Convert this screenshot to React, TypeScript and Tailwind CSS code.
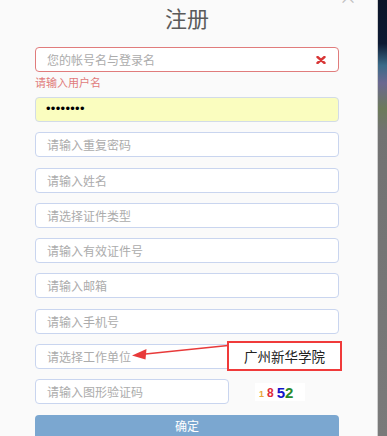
const fields = [
  '请输入重复密码',
  '请输入姓名',
  '请选择证件类型',
  '请输入有效证件号',
  '请输入邮箱',
  '请输入手机号',
  '请选择工作单位',
];

const font = { fontFamily: '"Noto Sans CJK SC", "Liberation Sans", sans-serif' };

const Field = ({ text }: { text: string }) => (
  <div className="h-[25px] rounded-[4px] border border-[#c9d5ef] bg-white pl-[11px] text-[12px] leading-[23px] text-[#acacac]">
    {text}
  </div>
);

export default function App() {
  return (
    <div className="flex h-[436px] w-[387px] overflow-hidden" style={font}>
      <div className="relative w-[377px] shrink-0 bg-[#fafafa] pl-[35px] pr-[38px]">
        {/* close button, mostly off screen */}
        <span className="absolute right-[20px] top-[-13px] text-[18px] leading-[18px] text-[#c0c0c0]">×</span>

        <div className="h-[35px] text-center text-[22px] leading-[35px] text-[#5a5a5a]">注册</div>

        <div className="mt-[12px] flex h-[25px] items-center justify-between rounded-[4px] border border-[#e07c7c] bg-white pl-[11px] pr-[12px] text-[12px] text-[#acacac]">
          <span>您的帐号名与登录名</span>
          <svg width="10" height="8" viewBox="0 0 10 8">
            <path d="M1.5 1 L8.5 7 M8.5 1 L1.5 7" stroke="#d83636" strokeWidth="2.4" strokeLinecap="round" />
          </svg>
        </div>
        <div className="h-[20px] text-[11px] leading-[20px] text-[#e07a7a]">请输入用户名</div>

        <div className="mt-[5px] flex flex-col gap-[10.3px]">
          <div
            className="h-[25px] rounded-[4px] border border-[#d2dbe8] bg-[#fafdbf] pl-[10px] text-[13px] leading-[22px] tracking-[0.3px] text-black"
            style={{ fontFamily: '"Liberation Sans", sans-serif' }}
          >
            ••••••••
          </div>
          {fields.map((f) => (
            <Field key={f} text={f} />
          ))}
          <div className="flex h-[25px] items-center">
            <div className="h-[25px] w-[194px] rounded-[4px] border border-[#c9d5ef] bg-white pl-[11px] text-[12px] leading-[23px] text-[#acacac]">
              请输入图形验证码
            </div>
            <div className="ml-[26px] flex h-[18px] w-[50px] items-end bg-white pl-[4px] pb-[2px] font-bold" style={{ fontFamily: '"Liberation Sans", sans-serif' }}>
              <span className="text-[9px] leading-[9px] text-[#e8a838]">1</span>
              <span className="ml-[3px] text-[12px] leading-[11px] text-[#e02a3a]">8</span>
              <span className="ml-[3px] text-[15px] leading-[13px] text-[#1515c8]">5</span>
              <span className="text-[15px] leading-[13px] text-[#2a8a2a]">2</span>
            </div>
          </div>
          <div className="h-[30px] rounded-t-[4px] bg-[#7ba7d0] pt-[2px] text-center text-[12px] leading-[18px] text-white">确定</div>
        </div>

        {/* annotation */}
        <svg className="absolute left-0 top-0" width="377" height="436" viewBox="0 0 377 436">
          <line x1="228" y1="345.5" x2="143" y2="354.3" stroke="#e83a3a" strokeWidth="1.4" />
          <polygon points="132,355.5 146.5,349 145.5,359.5" fill="#e83a3a" />
        </svg>
        <div className="absolute left-[227px] top-[341px] flex h-[30px] w-[115px] items-center justify-center border-2 border-[#f03a3a] bg-white text-[13.5px] text-[#222]">
          广州新华学院
        </div>
      </div>
      <div className="w-[1px] bg-[#cfcfcf]" />
      <div className="flex-1 bg-[linear-gradient(180deg,#0b1428_0%,#0d1a33_10%,#3a6a88_15%,#6a6890_19%,#6c7a5a_25%,#727272_30%,#7a7a7a_100%)]" />
    </div>
  );
}
